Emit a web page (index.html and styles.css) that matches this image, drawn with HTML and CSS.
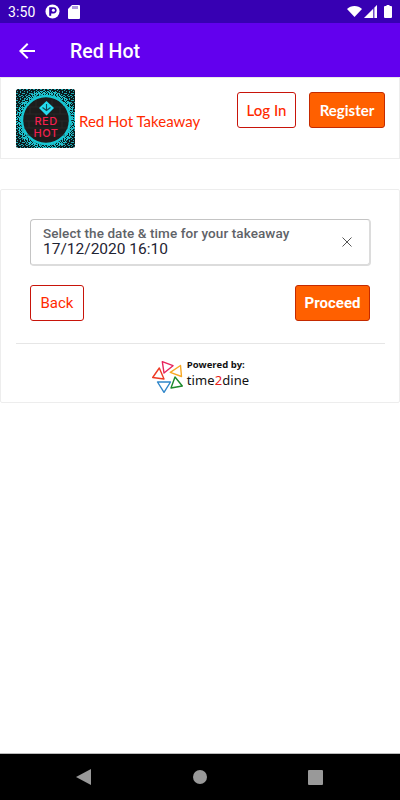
FILE: index.html
```html
<!DOCTYPE html>
<html lang="en">
<head>
<meta charset="utf-8">
<title>Red Hot</title>
<link rel="stylesheet" href="styles.css">
</head>
<body>
<div class="phone">
  <div class="status">
    <span class="clock">3:50</span>
    <svg class="st-icon" width="15" height="15" viewBox="0 0 15 15"><circle cx="7.500" cy="7.500" r="7" fill="#fff"/><path d="M4.200 3.200h2v8.600h-2z" fill="#3700b3"/><path d="M6 3.200h2.500a3.100 3.100 0 0 1 0 6.200H6z" fill="#3700b3"/><circle cx="8.400" cy="6.300" r="1.500" fill="#fff"/></svg>
    <svg class="st-icon" width="12" height="14" viewBox="0 0 12 14"><path d="M4 0h7a1 1 0 0 1 1 1v12a1 1 0 0 1-1 1H1a1 1 0 0 1-1-1V4z" fill="#fff"/><path d="M5 1v3M7 1v3M9 1v3" stroke="#3700b3" stroke-width=".8"/></svg>
    <span class="spacer"></span>
    <svg width="15" height="11" viewBox="0 0 15 11"><path d="M0 3C2 1.100 4.600 0 7.500 0S13 1.100 15 3L7.500 11z" fill="#fff"/></svg>
    <svg class="signal" width="13" height="13" viewBox="0 0 13 13"><path d="M13 0v13H0z" fill="#fff" fill-opacity=".3"/><path d="M9 4v9H0z M10.500 13H13V0l-2.500 2.500z" fill="#fff"/></svg>
    <svg class="battery" width="8" height="13" viewBox="0 0 8 13"><path d="M2.500 0h3v1H7a1 1 0 0 1 1 1v10a1 1 0 0 1-1 1H1a1 1 0 0 1-1-1V2a1 1 0 0 1 1-1h1.500z" fill="#fff"/></svg>
  </div>
  <header class="appbar">
    <svg class="back-arrow" width="16" height="16" viewBox="0 0 16 16"><path d="M16 7H3.800l5.600-5.600L8 0 0 8l8 8 1.400-1.400L3.800 9H16z" fill="#fff"/></svg>
    <h1 class="title">Red Hot</h1>
  </header>
  <main class="content">
    <section class="card brand-card">
      <svg class="logo" width="59" height="59" viewBox="0 0 59 59">
        <defs>
          <pattern id="noise" width="7" height="7" patternUnits="userSpaceOnUse">
            <rect width="7" height="7" fill="#0b1a1c"/>
            <path d="M0 0h1v1H0zM3 0h2v1H3zM1 2h1v1H1zM4 2h1v2H4zM6 1h1v1H6zM0 4h2v1H0zM3 5h1v1H3zM6 4h1v1H6zM2 6h1v1H2zM5 6h2v1H5z" fill="#1fa9b3"/>
          </pattern>
          <pattern id="noise2" width="5" height="5" patternUnits="userSpaceOnUse">
            <path d="M0 0h2v1H0zM3 0h1v2H3zM1 2h1v1H1zM0 3h1v1H0zM2 3h2v1H2zM4 2h1v1H4zM1 4h1v1H1zM3 4h2v1H3z" fill="#20c8d4"/>
          </pattern>
        </defs>
        <rect width="59" height="59" rx="1" fill="url(#noise)"/>
        <circle cx="30" cy="31" r="27.500" fill="none" stroke="url(#noise2)" stroke-width="5"/>
        <circle cx="30" cy="31" r="24" fill="#1c1c1c" stroke="#17c7d3" stroke-width="2.500"/>
        <path d="M11 18h38M8 25h44M7 32h46M8 39h44M11 46h38M20 11v7M36 11v7M14 18v7M28 18v7M44 18v7M20 25v7M38 25v7M13 32v7M46 32v7" stroke="#2c2c2c" stroke-width=".7" fill="none"/>
        <path d="M30.500 12l7.500 7-7.500 7.500L23 19z" fill="#25dbee"/>
        <path d="M30.500 15v6.500M26.500 18.500l4 3 4-3" stroke="#0f4a52" stroke-width="1.100" fill="none"/>
        <text class="logo-text" x="30" y="36" text-anchor="middle">RED</text>
        <text class="logo-text" x="30" y="48" text-anchor="middle">HOT</text>
      </svg>
      <span class="brand-name">Red Hot Takeaway</span>
      <span class="spacer"></span>
      <button class="btn btn-outline btn-login">Log In</button>
      <button class="btn btn-solid btn-register">Register</button>
    </section>
    <section class="card form-card">
      <div class="field">
        <div class="field-text">
          <div class="field-label">Select the date &amp; time for your takeaway</div>
          <div class="field-value">17/12/2020 16:10</div>
        </div>
        <svg class="clear" width="10" height="10" viewBox="0 0 10 10"><path d="M.5.5l9 9M9.500.5l-9 9" stroke="#555" stroke-width="1" fill="none"/></svg>
      </div>
      <div class="actions">
        <button class="btn btn-outline btn-back">Back</button>
        <button class="btn btn-solid btn-proceed">Proceed</button>
      </div>
      <div class="powered">
        <svg class="t2d-mark" width="31" height="32" viewBox="0 0 31 32" fill="none" stroke-width="1.400" stroke-linejoin="round">
          <path d="M10.300 .7L21 4.700 12 12z" stroke="#e8245c"/>
          <path d="M28.500 4.500L18.300 11.300 29.500 15.500z" stroke="#f7a823"/>
          <path d="M7.300 7L.7 16.500 12 18z" stroke="#ee3a24"/>
          <path d="M23 16L19 27l11.300-2z" stroke="#1c8a2c"/>
          <path d="M5.500 21h13L12 31.300z" stroke="#2f86c9"/>
        </svg>
        <div class="powered-text">
          <div class="powered-by">Powered by:</div>
          <div class="wordmark">time<span class="two">2</span>dine</div>
        </div>
      </div>
    </section>
  </main>
  <nav class="navbar">
    <svg width="15" height="16" viewBox="0 0 15 16"><path d="M15 0v16L0 8z" fill="#999"/></svg>
    <svg width="14" height="14" viewBox="0 0 14 14"><circle cx="7" cy="7" r="7" fill="#999"/></svg>
    <svg width="15" height="15" viewBox="0 0 15 15"><rect width="15" height="15" rx="1" fill="#999"/></svg>
  </nav>
</div>
</body>
</html>
```
FILE: styles.css
```css
* { box-sizing: border-box; }
html, body { margin: 0; padding: 0; }
body { background: #fff; font-family: "Roboto", sans-serif; }
.phone { width: 400px; height: 800px; display: flex; flex-direction: column; overflow: hidden; }
.spacer { flex: 1; }

.status { height: 23px; background: #3700b3; color: #fff; display: flex; align-items: center; padding: 0 8px 0 8px; }
.clock { font-size: 14px; margin-right: 11px; width: 26px; letter-spacing: .1px; }
.st-icon { margin-right: 8px; }
.signal { margin-left: 2px; }
.battery { margin-left: 7px; }

.appbar { height: 54px; background: #6200ee; display: flex; align-items: center; padding: 2px 0 0 19px; }
.title { margin: 0 0 0 35px; font-size: 19.500px; font-weight: 500; color: #fff; }

.content { flex: 1; display: flex; flex-direction: column; gap: 30px; }
.card { background: #fff; border: 1px solid #ededed; }
.brand-card { height: 82px; display: flex; align-items: flex-start; padding: 11px 14px 0 15px; border-top: 1px solid #e8e8e8; }
.logo { flex: none; border-radius: 2px; }
.logo-text { font-family: "Inter", sans-serif; font-size: 11px; font-weight: 500; fill: #f2204e; letter-spacing: .5px; }
.brand-name { font-family: "Lato", sans-serif; font-size: 15px; color: #ff2a00; margin: 23px 0 0 4px; }

.btn { font-family: "Lato", sans-serif; font-size: 15px; font-weight: 500; border-radius: 3px; padding: 0; display: block; }
.btn-outline { background: #fff; color: #ff2a00; border: 1px solid #c8140a; }
.btn-solid { background: #ff6000; color: #fff; border: 1px solid #c42a00; font-weight: 700; }
.btn-login { width: 59px; height: 36px; margin: 3px 13px 0 0; }
.btn-register { width: 76px; height: 36px; margin-top: 3px; }

.form-card { height: 214px; padding: 29px 14px 0 15px; border-radius: 2px; }
.field { margin: 0 14px; height: 47px; border: 1px solid #c4c4c4; border-bottom: 2px solid #dcdcdc; border-right: 2px solid #dcdcdc; border-radius: 4px; display: flex; align-items: center; padding: 0 17px 0 12px; }
.field-text { flex: 1; padding-bottom: 2px; }
.field-label { font-size: 13.500px; font-weight: 500; color: #5f6368; line-height: 16px; letter-spacing: .08px; }
.field-value { font-size: 15.500px; color: #1f2433; line-height: 16px; }

.actions { margin: 19px 15px 0 14px; display: flex; justify-content: space-between; }
.btn-back { width: 54px; height: 36px; font-family: "Roboto", sans-serif; font-weight: 400; }
.btn-proceed { width: 75px; height: 36px; font-family: "Roboto", sans-serif; }

.powered { margin-top: 22px; border-top: 1px solid #e6e6e6; height: 59px; display: flex; align-items: flex-start; justify-content: center; padding-top: 14px; gap: 4px; }
.t2d-mark { margin-top: 3px; }
.powered-text { display: flex; flex-direction: column; }
.powered-by { font-family: "Open Sans", sans-serif; font-size: 9.500px; font-weight: 700; color: #111; line-height: 13px; }
.wordmark { font-family: "Noto Sans", sans-serif; font-size: 13px; color: #111; line-height: 18px; letter-spacing: .1px; }
.two { color: #e8201a; }

.navbar { height: 47px; background: #000; border-top: 1px solid #bbb; display: flex; align-items: center; padding: 0 77px 0 76px; justify-content: space-between; }
```
